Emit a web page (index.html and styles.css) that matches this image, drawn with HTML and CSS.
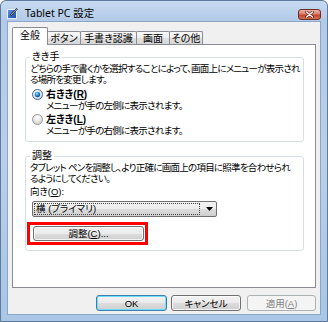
FILE: index.html
```html
<!DOCTYPE html>
<html lang="ja">
<head>
<meta charset="utf-8">
<title>Tablet PC 設定</title>
<link rel="stylesheet" href="styles.css">
</head>
<body>
<div class="window">
  <div class="titlebar">
    <svg class="app-icon" viewBox="0 0 11 11">
      <defs>
        <linearGradient id="ig" x1="0" y1="0" x2="1" y2="1">
          <stop offset="0" stop-color="#5c9cf0"/>
          <stop offset="1" stop-color="#1c45a0"/>
        </linearGradient>
      </defs>
      <rect x="0.5" y="1.5" width="9" height="9" fill="url(#ig)" stroke="#e8eef8"/>
      <path d="M10.2 0.6 L3.6 7.4" stroke="#2a2a2a" stroke-width="1.8"/>
      <path d="M10 0.8 L3.8 7.2" stroke="#ffffff" stroke-width="0.6"/>
      <path d="M3.4 7.6 L2.6 8.6 L3.2 6.9 Z" fill="#111"/>
    </svg>
    <span class="title">Tablet PC 設定</span>
    <div class="close">
      <svg viewBox="0 0 11 7" class="close-x">
        <path d="M2.5 1 L8.5 6 M8.5 1 L2.5 6" stroke="#5a1d14" stroke-width="2.6" stroke-linecap="round"/>
        <path d="M2.5 1 L8.5 6 M8.5 1 L2.5 6" stroke="#ffffff" stroke-width="1.3" stroke-linecap="round"/>
      </svg>
    </div>
  </div>
  <div class="client">
    <div class="tabs">
      <div class="tab active t1">全般</div>
      <div class="tab t2">ボタン</div>
      <div class="tab t3">手書き認識</div>
      <div class="tab t4">画面</div>
      <div class="tab t5">その他</div>
    </div>
    <div class="panel">
      <fieldset class="group g1">
        <legend>きき手</legend>
        <p class="desc">どちらの手で書くかを選択することによって、画面上にメニューが表示され<br>る場所を変更します。</p>
        <div class="radio-row">
          <svg class="radio" viewBox="0 0 11 11">
            <defs>
              <radialGradient id="rf1" cx="50%" cy="30%" r="65%">
                <stop offset="0" stop-color="#ffffff"/>
                <stop offset="1" stop-color="#d6dde6"/>
              </radialGradient>
              <radialGradient id="dot" cx="40%" cy="35%" r="70%">
                <stop offset="0" stop-color="#9be6ff"/>
                <stop offset="0.5" stop-color="#2b8ad8"/>
                <stop offset="1" stop-color="#0c3d86"/>
              </radialGradient>
            </defs>
            <circle cx="5.5" cy="5.5" r="5" fill="url(#rf1)" stroke="#3c6c98"/>
            <circle cx="5.5" cy="5.5" r="2.7" fill="url(#dot)"/>
          </svg>
          <span class="bold">右きき(<u>R</u>)</span>
        </div>
        <p class="sub">メニューが手の左側に表示されます。</p>
        <div class="radio-row second">
          <svg class="radio" viewBox="0 0 11 11">
            <defs>
              <radialGradient id="rf2" cx="50%" cy="30%" r="65%">
                <stop offset="0" stop-color="#ffffff"/>
                <stop offset="1" stop-color="#d4d4d4"/>
              </radialGradient>
            </defs>
            <circle cx="5.5" cy="5.5" r="5" fill="url(#rf2)" stroke="#9a9a9a"/>
          </svg>
          <span class="bold">左きき(<u>L</u>)</span>
        </div>
        <p class="sub">メニューが手の右側に表示されます。</p>
      </fieldset>
      <fieldset class="group g2">
        <legend>調整</legend>
        <p class="desc">タブレット ペンを調整し、より正確に画面上の項目に照準を合わせられ<br>るようにしてください。</p>
        <p class="orient">向き(<u>O</u>):</p>
        <div class="combo">
          <div class="combo-text">横 (プライマリ)</div>
          <div class="combo-arrow">
            <svg viewBox="0 0 7 4" class="arrow"><path d="M0 0 H7 L3.5 4 Z" fill="#000"/></svg>
          </div>
        </div>
        <div class="highlight">
          <div class="btn calib">調整(<u>C</u>)...</div>
        </div>
      </fieldset>
    </div>
    <div class="buttons">
      <div class="btn ok">OK</div>
      <div class="btn cancel">キャンセル</div>
      <div class="btn apply">適用(<u>A</u>)</div>
    </div>
  </div>
</div>
</body>
</html>
```
FILE: styles.css
```css
* { box-sizing: border-box; }
html, body { margin: 0; padding: 0; }
body {
  width: 328px;
  height: 322px;
  overflow: hidden;
  background: #ffffff;
  font-family: "Liberation Sans", "Noto Sans CJK JP", sans-serif;
  font-size: 9.5px;
  font-feature-settings: "palt" 1;
  color: #000;
}
p { margin: 0; }

.window {
  width: 328px;
  height: 322px;
  border: 1px solid #5f7a9c;
  border-radius: 6px 6px 0 0;
  background: linear-gradient(#c6daf1 0, #b3cbe8 20px, #b9cfe9 50%, #a8c6e6 100%);
  display: flex;
  flex-direction: column;
}

.titlebar {
  height: 20px;
  flex: none;
  display: flex;
  align-items: flex-start;
  padding: 0 7px 0 6px;
}
.app-icon { width: 11px; height: 11px; margin-top: 7px; flex: none; }
.title {
  margin-left: 7px;
  margin-top: 5px;
  font-family: "Noto Sans", "Noto Sans CJK JP", sans-serif;
  font-size: 10.5px;
  line-height: 14px;
  font-feature-settings: normal;
}
.close {
  margin-left: auto;
  margin-top: 8px;
  margin-right: -1px;
  width: 23px;
  height: 11px;
  border: 1px solid #6b2f27;
  border-radius: 3px;
  background: linear-gradient(#eab0a4 0, #d98170 45%, #c2442c 55%, #d4704f 100%);
  display: flex;
  align-items: center;
  justify-content: center;
}
.close-x { width: 11px; height: 7px; }

.client {
  flex: 1;
  margin: 0 6px 6px;
  background: #f0f0f0;
  border: 1px solid #8ca6c6;
  padding: 0 4px;
  display: flex;
  flex-direction: column;
}

.tabs {
  height: 22px;
  flex: none;
  display: flex;
  align-items: flex-end;
}
.tab {
  height: 13px;
  margin-left: -1px;
  border: 1px solid #898c95;
  border-bottom: none;
  border-radius: 2px 2px 0 0;
  background: linear-gradient(#fafafa 0, #eeeeee 50%, #e0e0e0 51%, #d6d6d6 100%);
  display: flex;
  align-items: center;
  justify-content: center;
  line-height: 11px;
  font-size: 10px;
}
.tab.active {
  height: 18px;
  margin-left: 0;
  margin-bottom: -1px;
  background: #ffffff;
  position: relative;
  z-index: 1;
  padding-bottom: 2px;
}
.t1 { width: 36px; }
.t2 { width: 34px; }
.t3 { width: 57px; }
.t4 { width: 34px; }
.t5 { width: 34px; }

.panel {
  height: 244px;
  flex: none;
  background: #ffffff;
  border: 1px solid #898c95;
  padding: 6px 11px 0 12px;
}

.group {
  margin: 0;
  min-width: 0;
  border: 1px solid #d5dfe5;
  border-radius: 3px;
  padding: 0 4px 5px 4px;
}
.group legend {
  padding: 0 2px;
  line-height: 12px;
  font-size: 10px;
}
.g2 { margin-top: 8px; padding-bottom: 5px; }

.desc { line-height: 11px; white-space: nowrap; letter-spacing: -0.75px; }
.radio-row {
  display: flex;
  align-items: center;
  height: 11px;
  margin-top: 4px;
}
.radio-row.second { margin-top: 3px; }
.radio { width: 11px; height: 11px; margin: 0 3px 0 2px; flex: none; }
.bold { font-weight: bold; line-height: 11px; font-size: 10px; }
.sub { margin-left: 16px; line-height: 11px; letter-spacing: -0.7px; }

.orient { margin-top: 2px; line-height: 11px; }

.combo {
  margin: 4px 0 0 2px;
  width: 185px;
  height: 16px;
  border: 1px solid #707070;
  border-radius: 2px;
  background: linear-gradient(#f3f3f3 0, #ebebeb 50%, #dddddd 51%, #cfcfcf 100%);
  padding: 1px;
  display: flex;
  align-items: center;
}
.combo-text {
  width: 166px;
  height: 12px;
  border: 1px dotted #444;
  line-height: 10px;
  padding-left: 1px;
  flex: none;
}
.combo-arrow {
  flex: 1;
  display: flex;
  align-items: center;
  justify-content: center;
  padding-left: 3px;
}
.arrow { width: 7px; height: 4px; }

.highlight {
  margin: 5px 0 0 -3px;
  width: 121px;
  height: 23px;
  border: 3px solid #ff0000;
  padding: 1px 1px 1px 3px;
}

.btn {
  border: 1px solid #707070;
  border-radius: 3px;
  background: linear-gradient(#f2f2f2 0, #ebebeb 50%, #dddddd 51%, #cfcfcf 100%);
  box-shadow: inset 0 0 0 1px rgba(255, 255, 255, 0.75);
  display: flex;
  align-items: center;
  justify-content: center;
  line-height: 11px;
}
.calib { height: 15px; width: 100%; }

.buttons {
  display: flex;
  justify-content: flex-end;
  gap: 4px;
  margin-top: 7px;
}
.buttons .btn { height: 16px; }
.ok {
  width: 71px;
  border-color: #3c7fb1;
  box-shadow: inset 0 0 0 1px #6fdcfb;
}
.cancel { width: 70px; margin-right: 2px; }
.apply {
  width: 69px;
  border-color: #adb2b5;
  background: #f4f4f4;
  box-shadow: none;
  color: #838383;
}
```
